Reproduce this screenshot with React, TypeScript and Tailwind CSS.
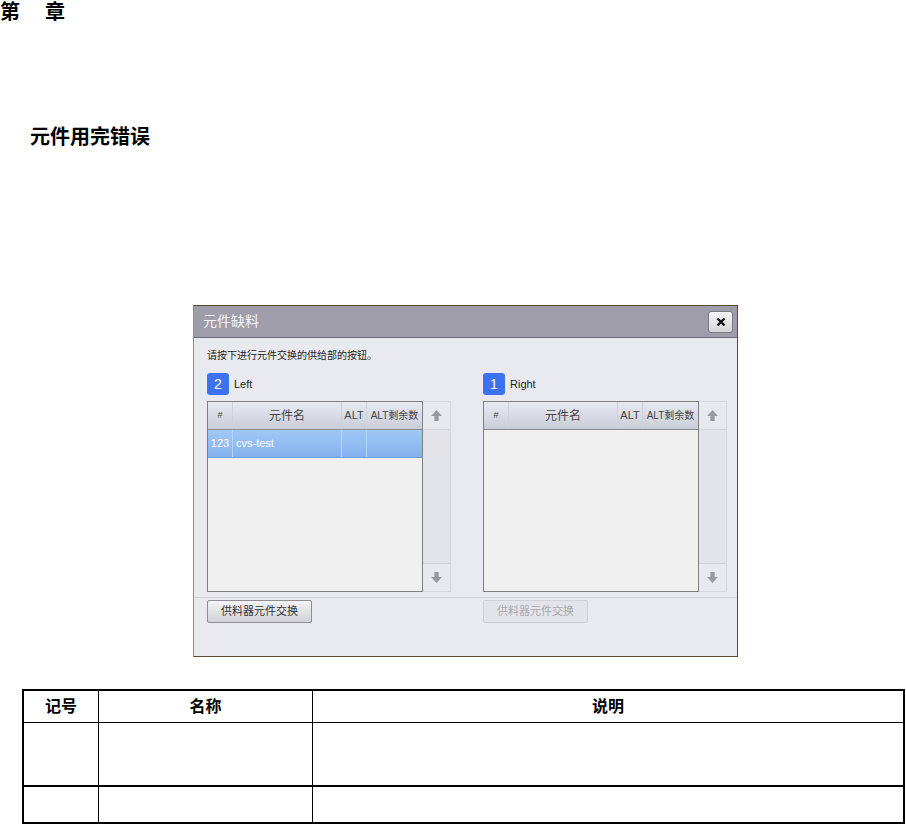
import React from 'react';

const font = { fontFamily: '"Liberation Sans", "Noto Sans CJK SC", sans-serif' };

function ArrowUp() {
  return (
    <svg width="13" height="13" viewBox="0 0 12 12">
      <path d="M6 1 L11 6.5 H8 V11 H4 V6.5 H1 Z" fill="#9a9a9e" />
    </svg>
  );
}

function ArrowDown() {
  return (
    <svg width="13" height="13" viewBox="0 0 12 12">
      <path d="M6 11 L11 5.5 H8 V1 H4 V5.5 H1 Z" fill="#9a9a9e" />
    </svg>
  );
}

interface PanelProps {
  num: string;
  label: string;
  rows: { id: string; name: string }[];
}

function Panel({ num, label, rows }: PanelProps) {
  return (
    <div className="flex flex-col w-[244px]">
      <div className="flex items-center h-[22px] gap-[5px]">
        <div className="w-[22px] h-[22px] rounded-[3px] bg-[#3d72ee] text-white text-[14px] flex items-center justify-center">
          {num}
        </div>
        <span className="text-[11px] text-[#222]">{label}</span>
      </div>
      <div className="flex mt-[6px] h-[191px]">
        <div className="w-[216px] border border-[#808080] bg-[#f0f0f0] flex flex-col">
          <div className="flex h-[28px] bg-gradient-to-b from-[#e8eaf2] to-[#c9cdd9] border-b border-[#8a8c94] text-[#444] text-[12px]">
            <div className="w-[25px] flex items-center justify-center border-r border-[#cfd2dc] text-[9px]">#</div>
            <div className="w-[109px] flex items-center justify-center border-r border-[#cfd2dc]">元件名</div>
            <div className="w-[25px] flex items-center justify-center border-r border-[#cfd2dc] text-[11px]">ALT</div>
            <div className="flex-1 flex items-center justify-center text-[10px]">ALT剩余数</div>
          </div>
          {rows.map((r) => (
            <div key={r.id} className="flex h-[28px] bg-gradient-to-b from-[#a0c8f6] to-[#84b2ee] border-b border-[#6f9fd8] text-white text-[11px]">
              <div className="w-[25px] flex items-center justify-center border-r border-[#b8d4f6]">{r.id}</div>
              <div className="w-[109px] flex items-center pl-[3px] border-r border-[#b8d4f6]">{r.name}</div>
              <div className="w-[25px] border-r border-[#b8d4f6]"></div>
              <div className="flex-1"></div>
            </div>
          ))}
        </div>
        <div className="w-[28px] flex flex-col bg-[#e3e4ea] border border-l-0 border-[#d6d7de]">
          <div className="h-[28px] flex items-center justify-center border-b border-[#d0d1d8] bg-[#e8e9ee]">
            <ArrowUp />
          </div>
          <div className="flex-1"></div>
          <div className="h-[28px] flex items-center justify-center border-t border-[#d0d1d8] bg-[#e8e9ee]">
            <ArrowDown />
          </div>
        </div>
      </div>
    </div>
  );
}

function Dialog() {
  return (
    <div className="ml-[193px] w-[545px] h-[352px] border border-[#5a4a30] border-l-[#c08a3a] bg-[#e9eaf0] flex flex-col">
      <div className="h-[32px] bg-[#a09dab] border-b border-[#6d6a75] flex items-center justify-between pl-[9px] pr-[4px]">
        <span className="text-[14px] text-[#f4f4f8]">元件缺料</span>
        <div className="w-[25px] h-[22px] rounded-[3px] border border-[#7a7a80] bg-gradient-to-b from-[#f6f6f8] to-[#d6d6da] flex items-center justify-center">
          <svg width="10" height="10" viewBox="0 0 10 10">
            <path d="M1.5 1.5 L8.5 8.5 M8.5 1.5 L1.5 8.5" stroke="#111" strokeWidth="2.4" />
          </svg>
        </div>
      </div>
      <div className="pl-[13px] pr-[10px] pt-[11px] flex flex-col">
        <div className="text-[10px] leading-[14px] text-[#222]">请按下进行元件交换的供给部的按钮。</div>
        <div className="flex justify-between mt-[10px]">
          <Panel num="2" label="Left" rows={[{ id: '123', name: 'cvs-test' }]} />
          <Panel num="1" label="Right" rows={[]} />
        </div>
      </div>
      <div className="mt-[5px] border-t border-[#cfd0d8]"></div>
      <div className="flex pl-[13px] pt-[2px]">
        <button className="w-[105px] h-[23px] rounded-[2px] border border-[#8e8e94] bg-gradient-to-b from-[#f4f4f6] to-[#d2d2d6] text-[11px] text-[#333]">
          供料器元件交换
        </button>
        <button className="ml-[171px] w-[105px] h-[23px] rounded-[2px] border border-[#d0d1d8] bg-[#e3e4ea] text-[11px] text-[#a8a8ae]">
          供料器元件交换
        </button>
      </div>
    </div>
  );
}

function InfoTable() {
  return (
    <div className="ml-[22px] w-[883px] border-2 border-black">
      <div className="flex h-[32px] border-b border-black text-[16px] font-bold">
        <div className="w-[75px] border-r border-black flex items-center justify-center">记号</div>
        <div className="w-[214px] border-r border-black flex items-center justify-center">名称</div>
        <div className="flex-1 flex items-center justify-center">说明</div>
      </div>
      <div className="flex h-[64px] border-b-2 border-black">
        <div className="w-[75px] border-r border-black"></div>
        <div className="w-[214px] border-r border-black"></div>
        <div className="flex-1"></div>
      </div>
      <div className="flex h-[35px]">
        <div className="w-[75px] border-r border-black"></div>
        <div className="w-[214px] border-r border-black"></div>
        <div className="flex-1"></div>
      </div>
    </div>
  );
}

export default function App() {
  return (
    <div className="w-[906px] h-[826px] bg-white text-black overflow-hidden" style={font}>
      <div className="h-[24px] text-[20px] leading-[24px] font-bold">
        第<span className="ml-[25px]">章</span>
      </div>
      <div className="mt-[101px] h-[24px] pl-[30px] text-[20px] leading-[24px] font-bold">元件用完错误</div>
      <div className="mt-[156px]">
        <Dialog />
      </div>
      <div className="mt-[32px]">
        <InfoTable />
      </div>
    </div>
  );
}
